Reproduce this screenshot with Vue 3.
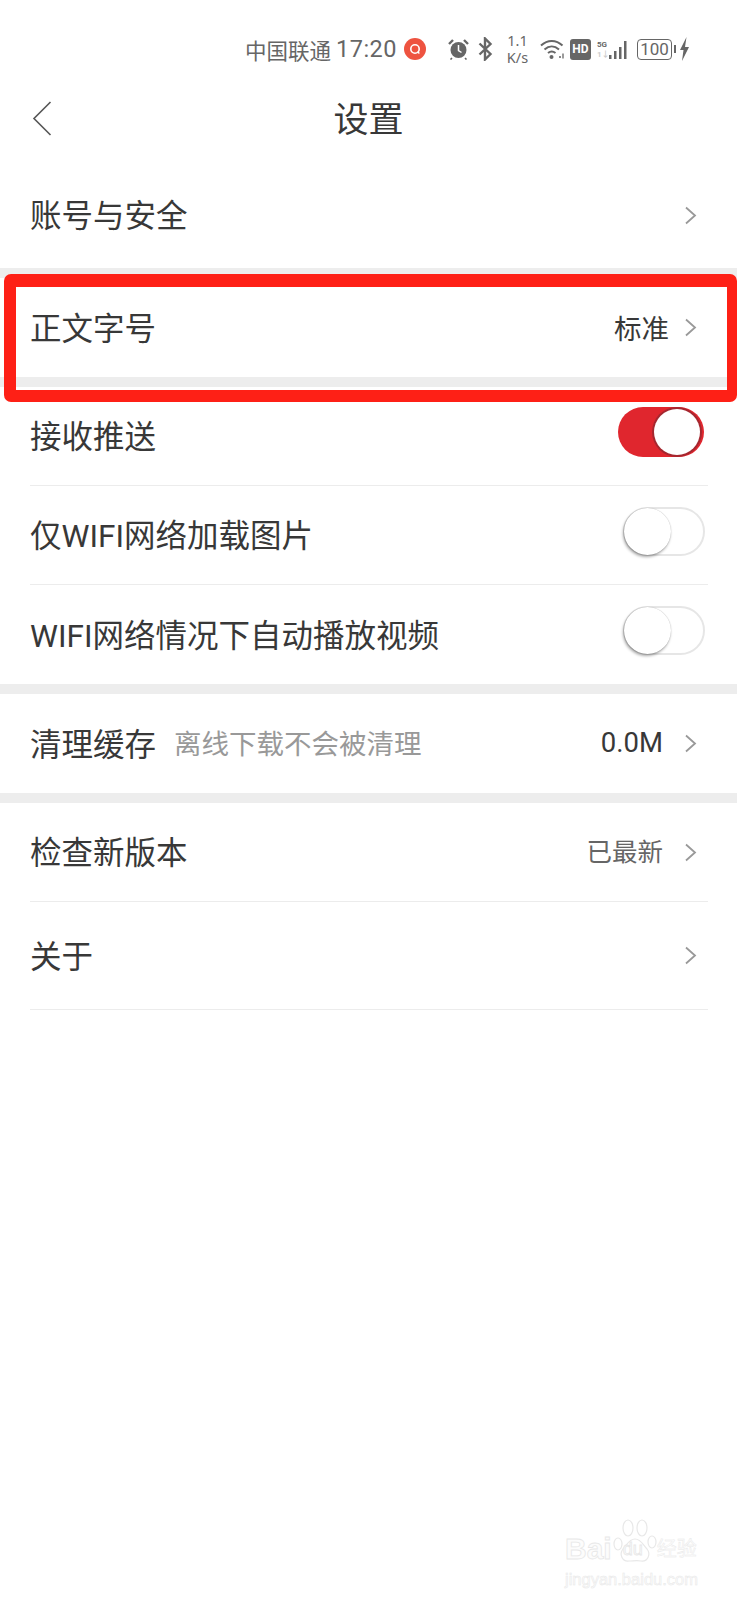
<script setup>
const switches = [
  { label: '接收推送', on: true },
  { label: '仅WIFI网络加载图片', on: false },
  { label: 'WIFI网络情况下自动播放视频', on: false },
]
</script>

<template>
  <div class="page">
    <div class="status">
      <span class="carrier">中国联通</span>
      <span class="clock">17:20</span>
      <span class="search-dot">
        <svg width="12" height="12" viewBox="0 0 12 12"><circle cx="6" cy="6" r="4.2" fill="none" stroke="#fff" stroke-width="1.6"/><path d="M8.6 8.8l1.8 1.8" stroke="#fff" stroke-width="1.4"/></svg>
      </span>
      <svg class="ic alarm" width="21" height="22" viewBox="0 0 21 22">
        <circle cx="10.5" cy="12" r="8" fill="#666"/>
        <path d="M1 6l4-4M20 6l-4-4" stroke="#666" stroke-width="2.4"/>
        <path d="M4 20l-1.500 1.500M17 20l1.500 1.500" stroke="#666" stroke-width="1.600"/>
        <path d="M10.500 7v5.500l3 2" fill="none" stroke="#fff" stroke-width="1.500"/>
      </svg>
      <svg class="ic bt" width="15" height="24" viewBox="0 0 15 24">
        <path d="M1.500 6.500l11 10.500-5.500 5.500V1.500L12.500 7 1.500 17.500" fill="none" stroke="#666" stroke-width="2.400"/>
      </svg>
      <div class="speed"><span>1.1</span><span>K/s</span></div>
      <svg class="ic wifi" width="25" height="22" viewBox="0 0 25 22">
        <path d="M1 7.500c6.500-6 15-6 21.500 0M4.500 11.500c4.500-4 10-4 14.500 0M8 15c2.500-2 5-2 7.500 0" fill="none" stroke="#666" stroke-width="2"/>
        <circle cx="11.500" cy="19" r="2" fill="#666"/>
        <path d="M19 19h2M23 15.500v5" stroke="#666" stroke-width="1.300"/>
      </svg>
      <span class="hd">HD</span>
      <div class="signal">
        <div class="net"><span class="net-on">5G</span><span class="net-off">1↓</span></div>
        <svg width="21" height="20" viewBox="0 0 21 20">
          <rect x="0" y="15" width="2.500" height="4" fill="#666"/>
          <rect x="5" y="11" width="2.500" height="8" fill="#666"/>
          <rect x="10" y="7" width="2.500" height="12" fill="#666"/>
          <rect x="15" y="1" width="2.500" height="18" fill="#666"/>
        </svg>
      </div>
      <div class="battery"><span class="battery-body">100</span><span class="battery-cap"></span></div>
      <svg class="ic bolt" width="9" height="24" viewBox="0 0 9 24"><path d="M6.500 0L0 13h3.500L2 24l7-14H5z" fill="#666"/></svg>
    </div>

    <div class="nav">
      <svg class="back" width="20" height="35" viewBox="0 0 20 35">
        <path d="M18.500 1L2 17.500 18.500 34" fill="none" stroke="#555" stroke-width="1.600"/>
      </svg>
      <span class="title">设置</span>
    </div>

    <div class="group first">
      <div class="row tall">
        <span class="label">账号与安全</span>
        <svg class="chev" width="13" height="19" viewBox="0 0 13 19"><path d="M2 1.500l9 8-9 8" fill="none" stroke="#999" stroke-width="1.800"/></svg>
      </div>
    </div>

    <div class="group">
      <div class="row">
        <span class="label">正文字号</span>
        <span class="value">标准</span>
        <svg class="chev" width="13" height="19" viewBox="0 0 13 19"><path d="M2 1.500l9 8-9 8" fill="none" stroke="#999" stroke-width="1.800"/></svg>
      </div>
    </div>

    <div class="group">
      <div v-for="s in switches" :key="s.label" class="row line">
        <span class="label">{{ s.label }}</span>
        <span class="toggle" :class="{ on: s.on }"><span class="knob"></span></span>
      </div>
    </div>

    <div class="group">
      <div class="row">
        <span class="label">清理缓存</span>
        <span class="hint">离线下载不会被清理</span>
        <span class="value wide">0.0M</span>
        <svg class="chev" width="13" height="19" viewBox="0 0 13 19"><path d="M2 1.500l9 8-9 8" fill="none" stroke="#999" stroke-width="1.800"/></svg>
      </div>
    </div>

    <div class="group">
      <div class="row line">
        <span class="label">检查新版本</span>
        <span class="value wide small">已最新</span>
        <svg class="chev" width="13" height="19" viewBox="0 0 13 19"><path d="M2 1.500l9 8-9 8" fill="none" stroke="#999" stroke-width="1.800"/></svg>
      </div>
      <div class="row about">
        <span class="label">关于</span>
        <svg class="chev" width="13" height="19" viewBox="0 0 13 19"><path d="M2 1.500l9 8-9 8" fill="none" stroke="#999" stroke-width="1.800"/></svg>
      </div>
    </div>

    <!-- red marker drawn on top of the screenshot -->
    <div class="marker"></div>

    <div class="watermark">
      <div class="wm-top">
        <span class="wm-bai">Bai</span>
        <span class="wm-paw">
          <svg width="44" height="46" viewBox="0 0 44 46" fill="none" stroke="#e8e8e8" stroke-width="1.200">
            <ellipse cx="5" cy="26" rx="4" ry="6"/>
            <ellipse cx="15" cy="10" rx="5" ry="8"/>
            <ellipse cx="29" cy="10" rx="5" ry="8"/>
            <ellipse cx="39" cy="24" rx="4" ry="6"/>
            <path d="M22 21c-6 0-8 6-12 10-4 5-1 13 6 12 4 0 8-1 12 0 7 1 10-7 6-12-4-4-6-10-12-10z"/>
          </svg>
          <span class="wm-du">du</span>
        </span>
        <span class="wm-jy">经验</span>
      </div>
      <div class="wm-url">jingyan.baidu.com</div>
    </div>
  </div>
</template>

<style scoped>
.page {
  position: relative;
  width: 737px;
  height: 1600px;
  overflow: hidden;
  background: #fff;
  color: #383838;
  font-family: Roboto, "Noto Sans CJK SC", sans-serif;
}
.status {
  height: 66px;
  padding: 16px 48px 2px 0;
  display: flex;
  justify-content: flex-end;
  align-items: center;
  color: #666;
}
.carrier { font-size: 21.500px; }
.clock { font-size: 23.500px; margin-left: 5px; letter-spacing: 0.500px; }
.search-dot {
  width: 22px;
  height: 22px;
  margin-left: 7px;
  border-radius: 50%;
  background: #ee5340;
  display: flex;
  align-items: center;
  justify-content: center;
}
.ic { flex: none; }
.alarm { margin-left: 22px; }
.bt { margin-left: 9px; }
.speed {
  width: 25px;
  margin-left: 12px;
  display: flex;
  flex-direction: column;
  align-items: center;
  font-size: 14.500px;
  line-height: 17px;
  font-family: "Noto Sans", sans-serif;
}
.wifi { margin-left: 10px; }
.hd {
  width: 21px;
  height: 21px;
  margin-left: 5px;
  border-radius: 3px;
  background: #666;
  color: #fff;
  font-size: 12px;
  font-weight: 700;
  line-height: 21px;
  text-align: center;
}
.signal {
  display: flex;
  align-items: flex-end;
  margin-left: 6px;
  height: 22px;
}
.net {
  width: 12px;
  display: flex;
  flex-direction: column;
  font-size: 8px;
  font-weight: 700;
  line-height: 10px;
}
.net-off { color: #ccc; }
.battery {
  display: flex;
  align-items: center;
  margin-left: 7px;
}
.battery-body {
  width: 35px;
  height: 21px;
  border: 1.500px solid #666;
  border-radius: 4px;
  box-sizing: border-box;
  font-size: 17px;
  line-height: 18px;
  text-align: center;
}
.battery-cap {
  width: 2px;
  height: 8px;
  margin-left: 2px;
  background: #666;
}
.bolt { margin-left: 4px; }

.nav {
  height: 68px;
  box-sizing: border-box;
  padding: 0 0 4px;
  position: relative;
  display: flex;
  align-items: center;
  justify-content: center;
}
.back {
  position: absolute;
  left: 32px;
  top: 17px;
}
.title { font-size: 35px; }

.group { border-top: 10px solid #ededed; }
.group.first { border-top: 10px solid #fff; }
.row {
  height: 99px;
  margin: 0 29px 0 30px;
  display: flex;
  align-items: center;
  box-sizing: border-box;
}
.row.tall { height: 106px; }
.row.line { border-bottom: 1px solid #ececec; }
.row.line:last-child { border-bottom: none; }
.row.about { height: 108px; border-bottom: 1px solid #ececec; }
.label { font-size: 31.500px; white-space: nowrap; padding-bottom: 4px; }
.hint {
  margin-left: 18px;
  font-size: 27.500px;
  color: #999;
  white-space: nowrap;
  padding-bottom: 3px;
}
.value { margin-left: auto; font-size: 27.500px; white-space: nowrap; padding-bottom: 2px; }
.value.small { font-size: 25.500px; color: #666; padding-bottom: 5px; }
.chev { margin-left: 15px; margin-right: 11px; flex: none; }
.value.wide + .chev { margin-left: 21px; }
.about .chev, .tall .chev { margin-left: auto; }

.toggle {
  position: relative;
  margin-left: auto;
  margin-right: 3px;
  margin-bottom: 8px;
  width: 82px;
  height: 49px;
  box-sizing: border-box;
  border: 2px solid #e6e6e6;
  border-radius: 25px;
  background: #fff;
}
.knob {
  position: absolute;
  left: -1px;
  top: -1px;
  width: 47px;
  height: 47px;
  border-radius: 50%;
  background: #fff;
  box-shadow: -1px 2px 3px rgba(0, 0, 0, 0.35), 0 0 1px rgba(0, 0, 0, 0.3);
}
.toggle.on {
  width: 86px;
  height: 50px;
  margin-right: 4px;
  margin-bottom: 9px;
  border: none;
  background: #e0262e;
}
.toggle.on .knob {
  left: 36px;
  top: 2px;
  width: 46px;
  height: 46px;
  box-shadow: 0 0 0 2px #a5272f;
}

.marker {
  position: absolute;
  left: 4px;
  top: 274px;
  width: 733px;
  height: 128px;
  box-sizing: border-box;
  border-style: solid;
  border-width: 13px 10px 12px 12px;
  border-color: #fe2016;
  border-radius: 7px;
}

.watermark {
  position: absolute;
  left: 565px;
  top: 1518px;
  width: 140px;
  color: #fcfcfc;
  -webkit-text-stroke: 0.8px #e8e8e8;
}
.wm-top { display: flex; align-items: flex-end; height: 46px; }
.wm-bai { font-size: 30px; line-height: 30px; font-family: "Liberation Sans", sans-serif; font-weight: 700; }
.wm-paw { position: relative; width: 44px; height: 46px; margin-left: 1px; }
.wm-du {
  position: absolute;
  left: 10px;
  top: 20px;
  font-size: 18px;
  line-height: 22px;
  font-family: "Liberation Sans", sans-serif;
}
.wm-jy { font-size: 20px; line-height: 30px; white-space: nowrap; -webkit-text-stroke: 0.4px #e8e8e8; }
.wm-url {
  font-size: 16.500px;
  line-height: 22px;
  margin-top: 4px;
  white-space: nowrap;
  font-family: "Liberation Sans", sans-serif;
  -webkit-text-stroke: 0.5px #e8e8e8;
}
</style>
